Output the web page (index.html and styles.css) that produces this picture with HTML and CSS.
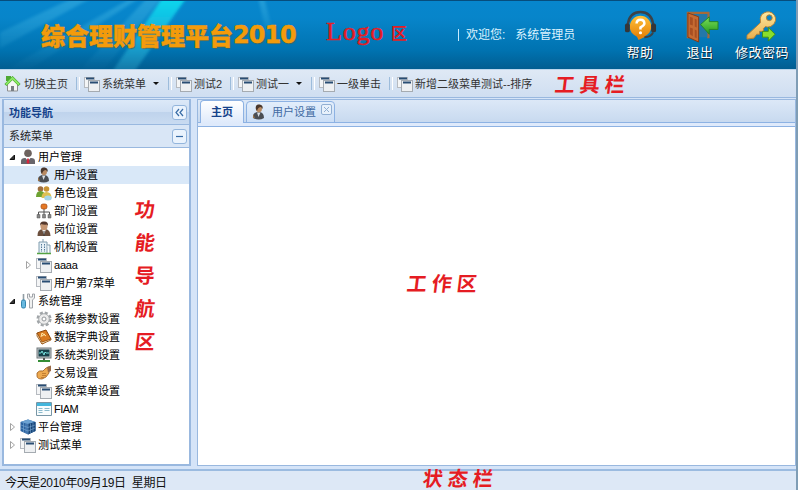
FILE: index.html
```html
<!DOCTYPE html>
<html lang="zh-CN">
<head>
<meta charset="utf-8">
<title>综合理财管理平台2010</title>
<link rel="stylesheet" href="styles.css">
</head>
<body>
<svg class="defs" width="0" height="0">
  <defs>
    <linearGradient id="gold" x1="0" y1="0" x2="0" y2="1"><stop offset="0" stop-color="#ffe9a0"/><stop offset="1" stop-color="#e9ae4c"/></linearGradient>
    <linearGradient id="green" x1="0" y1="0" x2="0" y2="1"><stop offset="0" stop-color="#7be05a"/><stop offset="1" stop-color="#259a1e"/></linearGradient>
    <linearGradient id="orange" x1="0" y1="0" x2="0" y2="1"><stop offset="0" stop-color="#ffc13a"/><stop offset="1" stop-color="#e58209"/></linearGradient>
    <symbol id="windows" viewBox="0 0 16 16"><rect x=".5" y="1.500" width="10" height="10" fill="#f4f5f6" stroke="#b6bac0"/><path d="M2 2.500h8" stroke="#294d73" stroke-width="2"/><rect x="4.500" y="4.500" width="11" height="11" fill="#eef0f2" stroke="#a5abb1"/><path d="M6 6.500h8" stroke="#294d73" stroke-width="2"/></symbol>
    <symbol id="home" viewBox="0 0 16 16"><path d="M3 8v7h10V8L8 3z" fill="#f6f6f6" stroke="#8d8f90"/><path d="M3 5V1.500h2V4M1 9l7-7 7 7" fill="none" stroke="#4fa934" stroke-width="3"/><path d="M1.500 8.500 8 2l6.500 6.500" fill="none" stroke="#8bea64" stroke-width="1.800"/><path d="M6.500 15v-5h3v5" fill="#777d83"/></symbol>
    <symbol id="manager" viewBox="0 0 16 16"><circle cx="8" cy="4.300" r="3.800" fill="#6d625e"/><path d="M1 15v-3q0-3 4-3h6q4 0 4 3v3z" fill="#68656a"/><path d="M5.500 9 8 12l2.500-3z" fill="#fff"/><path d="M7.300 9.500h1.400l.8 4L8 15l-1.500-1.500z" fill="#d7263d"/></symbol>
    <symbol id="user" viewBox="0 0 16 16"><path d="M2 14q-.5-5 4-6h3q4 1 4 6-5 3-11 0z" fill="#4a4e54"/><path d="M6 8.500 7.500 13l2-4.500z" fill="#d8dde2"/><ellipse cx="8" cy="4.500" rx="3" ry="3.800" fill="#b88a62"/><path d="M4.800 5Q4 0 8.500.5q4 .5 3 4.500L10 3q-3 0-4 4z" fill="#4a372c"/><path d="M2 10v4h2z" fill="#9a7348"/></symbol>
    <symbol id="group" viewBox="0 0 16 16"><circle cx="4.500" cy="4" r="2.800" fill="#9e6f40"/><path d="M0 12q0-6 4.500-6T9 12z" fill="#6da231"/><circle cx="10.500" cy="4" r="2.800" fill="#c89434"/><path d="M5.500 13q0-6 5-6t5 6z" fill="#dcc052"/><ellipse cx="12" cy="13" rx="3.800" ry="2.500" fill="#a5d5e8"/></symbol>
    <symbol id="org" viewBox="0 0 16 16"><path d="M8 5v7M2.500 12V9h11v3" fill="none" stroke="#555"/><rect x="5" y="1" width="6" height="5" rx="2" fill="#e57825" stroke="#a34b13" stroke-width=".7"/><path d="M1 11.500h3V15H1zM6.500 11.500h3V15h-3zM12 11.500h3V15h-3z" fill="#888" stroke="#555" stroke-width=".5"/></symbol>
    <symbol id="post" viewBox="0 0 16 16"><path d="M1.500 15q-.5-6 5-7h3q5 1 5 7z" fill="#6b4f3d"/><path d="m6 8 2 6 2-6z" fill="#fff"/><path d="M8 10v5" stroke="#333"/><ellipse cx="8" cy="5.200" rx="3.500" ry="4" fill="#c69774"/><path d="M4 5Q3.500.3 8 .5 12.500.3 12 5L11 3.500Q8 4 5 3z" fill="#54382c"/></symbol>
    <symbol id="building" viewBox="0 0 16 16"><path d="M3 14V3h8v11" fill="#e7f1f7" stroke="#809daf"/><path d="M7 3V0M11 6h3v8" fill="#eff5f8" stroke="#809daf"/><path d="M5.500 5v8M8.500 5v8" stroke="#547a98" stroke-dasharray="1.500 1"/><path d="M1 14.500h14" stroke="#55a344" stroke-width="1.500"/></symbol>
    <symbol id="tools" viewBox="0 0 16 16"><path d="M3.500 1v7" stroke="#929da4" stroke-width="1.600"/><rect x="1.500" y="7" width="4" height="8" rx="1.500" fill="#69b9df" stroke="#3585ae"/><path d="M7.500 1v4l2 2v8h3V7l2-2V1h-2v3h-3V1z" fill="#f0f1f1" stroke="#969ba0" stroke-width=".9"/></symbol>
    <symbol id="gear" viewBox="0 0 16 16"><circle cx="8" cy="8" r="6.300" fill="none" stroke="#a1a5a8" stroke-width="2.500" stroke-dasharray="3 1.950"/><circle cx="8" cy="8" r="5.300" fill="#ececec" stroke="#a7abad"/><circle cx="8" cy="8" r="2" fill="#fff" stroke="#92979a"/></symbol>
    <symbol id="book" viewBox="0 0 16 16"><path d="m1 4 9-3 5 9-9 5z" fill="#d87a20" stroke="#914b0d"/><path d="M1 4v3l5 8 9-4v-1l-9 3z" fill="#fbe5bb" stroke="#914b0d" stroke-width=".8"/><path d="m5 8 1-4 4 3M6 7l3-2" fill="none" stroke="#ffe9a9"/></symbol>
    <symbol id="monitor" viewBox="0 0 16 16"><rect x="1" y="1" width="14" height="10" fill="#c3c9cb" stroke="#70787d"/><rect x="2.500" y="2.500" width="11" height="7" fill="#163e48"/><path d="M3 6h2l1-2 2 4 1-3 1 1h3" fill="none" stroke="#77dfdb"/><path d="M8 11v2" stroke="#555" stroke-width="2"/><path d="M2 14h12" stroke="#338d35" stroke-width="2"/></symbol>
    <symbol id="hand" viewBox="0 0 16 16"><path d="M1 8q2-3 6-2l3-3 3-1v6l-3 4-4 2q-5 0-5-3z" fill="#eda94f" stroke="#9b5b1c" stroke-width=".8"/><path d="M6 8.500h4M6 10.500h4M5 12.500h3" stroke="#b87429" stroke-width=".8"/><path d="m11 2 4-1.500V6l-3 1.500z" fill="#9a6a46"/></symbol>
    <symbol id="form" viewBox="0 0 16 16"><path d="M.5 1.500h15v13H.5z" fill="#f8fcfd" stroke="#7896a6"/><path d="M1 3.500h14" stroke="#43b6dc" stroke-width="3"/><path d="M2.500 7.500h4M2.500 9.500h4M2.500 11.500h4M8.500 7.500h5M8.500 9.500h5" stroke="#8bbacd"/></symbol>
    <symbol id="cube" viewBox="0 0 16 16"><path d="m8 .5 7.500 2.500v9L8 15.500.5 12V3z" fill="#2b62a0"/><path d="m.5 3 7.500 2 7.500-2L8 .5z" fill="#6ca2d2"/><path d="m8 5 7.500-2v9L8 15.500z" fill="#174579"/><path d="M1 6l7 2.500L15 6M1 9l7 3 7-3M3.500 4v9M6 4.500v10M8 5v10M10.500 4.500v10M13 4v9" fill="none" stroke="#89b7dd" stroke-width=".5"/></symbol>
    <symbol id="open" viewBox="0 0 8 8"><path d="M6.500 2v4.500H2z" fill="#333" stroke="#111"/></symbol>
    <symbol id="closed" viewBox="0 0 8 8"><path d="M2.500.5v7L6.500 4z" fill="#fff" stroke="#999" stroke-width=".9"/></symbol>
  </defs>
</svg>
<div class="app">
  <header class="banner">
    <svg class="rays" viewBox="0 0 400 69" preserveAspectRatio="none">
      <defs>
        <linearGradient id="ray" x1="0" y1="0" x2="0" y2="1"><stop offset="0" stop-color="#07e3f2" stop-opacity=".9"/><stop offset="1" stop-color="#42c3e4" stop-opacity=".25"/></linearGradient>
        <linearGradient id="faint" x1="0" y1="0" x2="0" y2="1"><stop offset="0" stop-color="#69d7f5" stop-opacity=".3"/><stop offset="1" stop-color="#69d7f5" stop-opacity="0"/></linearGradient>
        <filter id="soft"><feGaussianBlur stdDeviation="1.500"/></filter>
      </defs>
      <g filter="url(#soft)">
        <path d="M163-4h24L134 72h-22z" fill="url(#ray)"/>
        <path d="M148-4h14L102 72H78zM133-4h8L30 69H7zM75-4h18L0 48V32z" fill="url(#faint)"/>
        <path d="M258-4h6l7 28-3 16z" fill="url(#faint)"/>
      </g>
    </svg>
    <h1 class="brand">综合理财管理平台<span class="year">2010</span></h1>
    <div class="welcome"><span class="bar"></span><span>欢迎您:</span><span>系统管理员</span></div>
    <nav class="actions">
      <a class="action help"><svg viewBox="0 0 34 34"><path d="M4 17V14Q6 2 17 2t13 12v3" fill="none" stroke="#3b4248" stroke-width="2.500"/><circle cx="17" cy="17" r="11" fill="url(#orange)"/><path d="m12 25 3 6 8-4z" fill="#e58209"/><path d="M13 14q0-4 4-4t4 4q0 2-4 4v2" fill="none" stroke="#fff" stroke-width="2.600"/><circle cx="17" cy="23.500" r="1.600" fill="#fff"/><rect x="1" y="14" width="5" height="9" rx="2" fill="#343638"/><rect x="28" y="14" width="5" height="9" rx="2" fill="#343638"/><path d="M30 23q-2 5-9 5" fill="none" stroke="#3b4248" stroke-width="2"/></svg><span>帮助</span></a>
      <a class="action exit"><svg viewBox="0 0 34 34"><path d="M2 29V3h21v26" fill="none" stroke="#a76a38" stroke-width="2.500"/><path d="M4 4h18v24H13z" fill="#2378a9"/><path d="m2 3 11 4v26L2 28z" fill="#c66b32" stroke="#843b18"/><path d="m4 7 3 1v8l-3-1zm5 2 2 1v8l-2-1zM4 18l3 1v8l-3-2zm5 2 2 1v8l-2-1z" fill="#a84f22"/><path d="m15 15 9-8v5h9v8h-9v5z" fill="url(#green)" stroke="#238328"/></svg><span>退出</span></a>
      <a class="action password"><svg viewBox="0 0 34 34"><path fill-rule="evenodd" d="M16 5q5-5 11-2 6 5 2 11-4 5-9 3l-2 2v3h-4v3h-3l-3 4-7 1v-4l14-13q-1-5 1-8zm8 0a3 3 0 1 0 0 6 3 3 0 1 0 0-6z" fill="url(#gold)" stroke="#b98235"/><path d="M17 22h6v-4l7 7-7 7v-4h-6z" fill="#8ade2c" stroke="#3f8f18"/></svg><span>修改密码</span></a>
    </nav>
  </header>

  <nav class="toolbar">
    <a class="tool t-home"><svg><use href="#home"/></svg>切换主页</a>
    <a class="tool t-system"><svg><use href="#windows"/></svg>系统菜单<i class="caret"></i></a>
    <a class="tool t-test2"><svg><use href="#windows"/></svg>测试2</a>
    <a class="tool t-test1"><svg><use href="#windows"/></svg>测试一<i class="caret"></i></a>
    <a class="tool t-click"><svg><use href="#windows"/></svg>一级单击</a>
    <a class="tool t-new"><svg><use href="#windows"/></svg>新增二级菜单测试--排序</a>
  </nav>

  <main class="body">
    <aside class="sidebar">
      <div class="panel-title"><b>功能导航</b><span class="button"><svg viewBox="0 0 13 13"><path d="m6 3-3 3.500 3 3.500m4-7L7 6.500 10 10"/></svg></span></div>
      <div class="panel-subtitle"><span>系统菜单</span><span class="button"><svg viewBox="0 0 13 13"><path d="M3 6.500h7"/></svg></span></div>
      <ul class="tree">
        <li><svg class="arrow"><use href="#open"/></svg><svg><use href="#manager"/></svg>用户管理</li>
        <li class="child selected"><svg><use href="#user"/></svg>用户设置</li>
        <li class="child"><svg><use href="#group"/></svg>角色设置</li>
        <li class="child"><svg><use href="#org"/></svg>部门设置</li>
        <li class="child"><svg><use href="#post"/></svg>岗位设置</li>
        <li class="child"><svg><use href="#building"/></svg>机构设置</li>
        <li class="branch"><svg class="arrow"><use href="#closed"/></svg><svg><use href="#windows"/></svg>aaaa</li>
        <li class="child"><svg><use href="#windows"/></svg>用户第7菜单</li>
        <li><svg class="arrow"><use href="#open"/></svg><svg><use href="#tools"/></svg>系统管理</li>
        <li class="child"><svg><use href="#gear"/></svg>系统参数设置</li>
        <li class="child"><svg><use href="#book"/></svg>数据字典设置</li>
        <li class="child"><svg><use href="#monitor"/></svg>系统类别设置</li>
        <li class="child"><svg><use href="#hand"/></svg>交易设置</li>
        <li class="child"><svg><use href="#windows"/></svg>系统菜单设置</li>
        <li class="child fiam"><svg><use href="#form"/></svg>FIAM</li>
        <li><svg class="arrow"><use href="#closed"/></svg><svg><use href="#cube"/></svg>平台管理</li>
        <li><svg class="arrow"><use href="#closed"/></svg><svg><use href="#windows"/></svg>测试菜单</li>
      </ul>
    </aside>
    <section class="work">
      <div class="tabs">
        <div class="tab active">主页</div>
        <div class="tab"><svg class="tab-icon"><use href="#user"/></svg>用户设置<svg class="close" viewBox="0 0 11 11"><rect x=".5" y=".5" width="10" height="10" rx="1.500"/><path d="m3 3 5 5m0-5L3 8"/></svg></div>
      </div>
      <div class="content"></div>
    </section>
  </main>
  <footer class="status">今天是2010年09月19日&nbsp; 星期日</footer>

  <div class="note note-logo"><span class="latin">Logo</span><span class="area">区</span></div>
  <div class="note note-toolbar">工具栏</div>
  <div class="note note-nav"><span>功</span><span>能</span><span>导</span><span>航</span><span>区</span></div>
  <div class="note note-work">工作区</div>
  <div class="note note-status">状态栏</div>
</div>
</body>
</html>
```
FILE: styles.css
```css
* { box-sizing: border-box; }
body { margin: 0; font: 11px/18px "Liberation Sans", "Noto Sans CJK SC", sans-serif; color: #111; }
.defs { position: absolute; }
.app { position: relative; display: flex; flex-direction: column; width: 798px; height: 490px; overflow: hidden; background: #d3e1f3; border-right: 2px solid #7f9db5; white-space: nowrap; }
svg { display: block; flex: none; }

.banner { position: relative; display: flex; flex: none; height: 69px; border-top: 1px solid #064d7d; background: linear-gradient(#0786cd, #0785ca 25%, #0073b1 72%, #015d91); }
.rays { position: absolute; left: 0; top: 0; width: 400px; height: 68px; }
.brand { position: relative; display: flex; align-items: center; width: 417px; margin: 0; padding: 0 0 0 41px; font: 900 24px/68px "Noto Sans CJK SC", sans-serif; color: #f39b0b; -webkit-text-stroke: .4px #f39b0b; text-shadow: 1px 1px 1px #456955; }
.year { display: inline-block; font: bold 24px/68px "DejaVu Sans", sans-serif; letter-spacing: -1px; }
.welcome { display: flex; align-items: center; width: 203px; padding-left: 41px; gap: 9px; font-size: 12px; color: #dcf3ff; }
.bar { width: 1px; height: 12px; margin-right: -2px; background: #c5eaff; }
.welcome span:last-child { margin-left: 1px; }
.actions { display: flex; }
.action { display: flex; flex-direction: column; align-items: center; width: 40px; padding-top: 9px; font-size: 13px; line-height: 18px; color: #fff; text-shadow: 1px 1px #102a3c; letter-spacing: .5px; }
.action svg { width: 33px; height: 33px; }
.action span { margin-top: 1px; }
.exit { margin-left: 20px; }
.exit svg { margin-left: 5px; }
.password { width: 60px; margin-left: 12px; }

.toolbar { display: flex; flex: none; height: 29px; padding-left: 4px; border-top: 1px solid #b9d5ed; border-bottom: 1px solid #99b8df; background: linear-gradient(#dfe9f5, #cfdef1); color: #333; }
.tool { display: flex; align-items: center; height: 27px; gap: 3px; }
.tool svg { width: 16px; height: 16px; }
.tool.t-home svg { width: 17px; }
.tool + .tool::before { content: ""; width: 2px; height: 13px; margin-right: 2px; border-left: 1px solid #9dbcdb; border-right: 1px solid #fff; }
.tool + .tool { position: relative; left: 0; gap: 2px; }
.t-home { width: 72px; }
.t-system { width: 92px; }
.t-test2 { width: 62px; }
.t-test1 { width: 81px; }
.t-click { width: 78px; }
.caret { margin-left: 5px; border: 3px solid transparent; border-top-color: #111; border-bottom: 0; }

.body { display: flex; flex: none; height: 371px; padding: 1px 0 3px 2px; gap: 6px; background: #d5e4f8; }
.sidebar { display: flex; flex-direction: column; width: 189px; border: 1px solid #99b8df; border-width: 1px 2px 2px; background: #fff; }
.panel-title, .panel-subtitle { display: flex; align-items: center; justify-content: space-between; flex: none; padding: 0 2px 0 5px; }
.panel-title { height: 25px; padding-top: 1px; border-bottom: 1px solid #99b8df; background: linear-gradient(#dce9f8, #cfdff3 48%, #bfd3ec 50%, #c9dbf1); color: #15428b; }
.panel-subtitle { height: 23px; border-bottom: 1px solid #99b8df; background: #d9e6f6; color: #222; }
.button { width: 15px; height: 15px; border: 1px solid #93b5dc; border-radius: 3px; background: #eaf3fd; }
.button svg { width: 13px; height: 13px; fill: none; stroke: #376ba5; stroke-width: 1.200; }
.tree { margin: 0; padding: 0; list-style: none; }
.tree li { display: flex; align-items: center; height: 18px; padding-left: 4px; color: #000; }
.tree svg { width: 16px; height: 16px; margin-right: 2px; }
.tree .arrow { width: 8px; height: 8px; margin-right: 4px; }
.tree .child { padding-left: 32px; }
.tree .branch { padding-left: 20px; }
.tree .branch { letter-spacing: -.2px; }
.tree .fiam { letter-spacing: -.5px; }
.tree .selected { background: #d9e8f8; }

.work { display: flex; flex-direction: column; width: 599px; border: 1px solid #99b8df; background: #fff; }
.tabs { display: flex; flex: none; align-items: flex-end; height: 27px; padding-left: 2px; gap: 2px; border-bottom: 4px solid #dfeafb; background: linear-gradient(#dce8f7, #c7d9ef); box-shadow: inset 0 -1px #8db2e3; }
.tab { display: flex; align-items: center; height: 22px; padding: 0 2px 0 4px; border: 1px solid #8db2e3; border-radius: 4px 4px 0 0; background: linear-gradient(#e3eefb, #cbdef6); color: #416aa3; }
.tab.active { width: 44px; height: 23px; padding: 0; justify-content: center; border-bottom: 0; background: linear-gradient(#fff, #dfeafb); color: #15428b; font-weight: bold; }
.tab-icon { width: 16px; height: 16px; margin-right: 5px; }
.close { width: 11px; height: 11px; margin: -5px 0 0 5px; fill: #e8f1fb; stroke: #91afd3; }
.content { flex: 1; margin-top: -1px; border-top: 1px solid #8db2e3; }
.status { flex: none; height: 21px; padding: 6px 0 0 5px; border-top: 2px solid #9bbbe0; background: #dde8f6; font-size: 12px; line-height: 13px; letter-spacing: -.33px; }

.note { position: absolute; color: #e51c23; font: bold 20px/22px "Noto Sans CJK SC", sans-serif; letter-spacing: 5px; transform: skewX(-7deg); }
.note-logo { display: flex; left: 326px; top: 20px; gap: 7px; transform: none; letter-spacing: 0; }
.latin { font: 26px/24px "Liberation Serif", serif; letter-spacing: .8px; -webkit-text-stroke: .5px #e51c23; }
.area { font-size: 16px; line-height: 25px; }
.note-toolbar { left: 555px; top: 73px; }
.note-nav { display: flex; flex-direction: column; gap: 11px; left: 135px; top: 198px; transform: none; letter-spacing: 0; }
.note-nav span { transform: skewX(-7deg); }
.note-work { left: 407px; top: 272px; }
.note-status { left: 423px; top: 467px; }
```
